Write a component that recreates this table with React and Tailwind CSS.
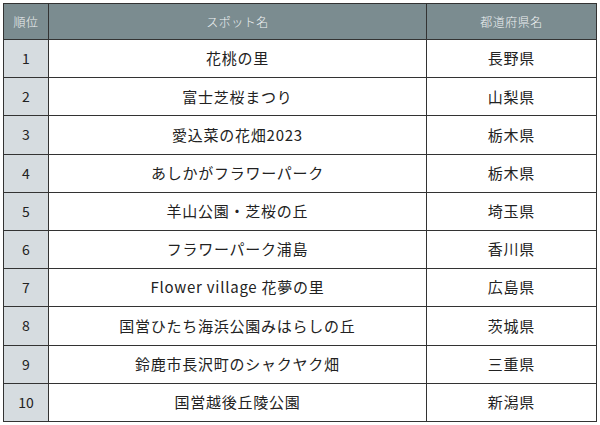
import React from "react";

const rows = [
  ["1", "花桃の里", "長野県"],
  ["2", "富士芝桜まつり", "山梨県"],
  ["3", "愛込菜の花畑2023", "栃木県"],
  ["4", "あしかがフラワーパーク", "栃木県"],
  ["5", "羊山公園・芝桜の丘", "埼玉県"],
  ["6", "フラワーパーク浦島", "香川県"],
  ["7", "Flower village 花夢の里", "広島県"],
  ["8", "国営ひたち海浜公園みはらしの丘", "茨城県"],
  ["9", "鈴鹿市長沢町のシャクヤク畑", "三重県"],
  ["10", "国営越後丘陵公園", "新潟県"],
];

export default function App() {
  return (
    <div className="w-[600px] h-[425px] bg-white pt-[3px] pl-[3px]" style={{ fontFamily: '"Noto Sans CJK JP", "Noto Sans", sans-serif' }}>
      <table className="border-collapse table-fixed w-[593px] text-[#222]">
        <colgroup>
          <col className="w-[45px]" />
          <col className="w-[378px]" />
          <col className="w-[170px]" />
        </colgroup>
        <thead>
          <tr className="h-[36px] bg-[#7b8c90] text-[#eef1f2] text-[12px] tracking-[0.04em]">
            <th className="border-[1.5px] border-[#333] font-light">順位</th>
            <th className="border-[1.5px] border-[#333] font-light">スポット名</th>
            <th className="border-[1.5px] border-[#333] font-light">都道府県名</th>
          </tr>
        </thead>
        <tbody>
          {rows.map((r) => (
            <tr key={r[0]} className="h-[38.2px]">
              <td className="border-[1.5px] border-[#333] bg-[#d6dce0] text-center text-[14px]">{r[0]}</td>
              <td className="border-[1.5px] border-[#333] text-center text-[15px] tracking-[0.05em]">{r[1]}</td>
              <td className="border-[1.5px] border-[#333] text-center text-[15px] tracking-[0.05em]">{r[2]}</td>
            </tr>
          ))}
        </tbody>
      </table>
    </div>
  );
}
